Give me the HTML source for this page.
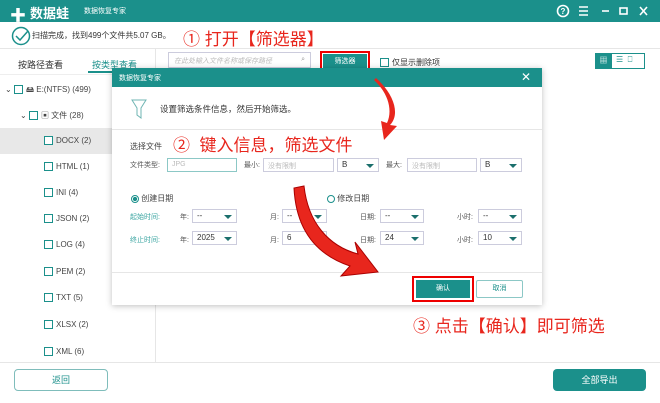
<!DOCTYPE html>
<html><head><meta charset="utf-8"><style>
*{margin:0;padding:0;box-sizing:border-box}
body{width:660px;height:403px;overflow:hidden;background:#fff;font-family:"Liberation Sans","Noto Sans CJK SC",sans-serif;position:relative;color:#333}
.a{position:absolute;white-space:nowrap}
.t{background:#1b908b}
.red{color:#e8261d;font-size:17px}
.cb{display:inline-block;width:9px;height:9px;border:1px solid #1b908b;vertical-align:middle;margin-right:3px;background:#fff}
.item{position:absolute;font-size:8px;color:#444}
.inp{position:absolute;height:14px;border:1px solid #ccd;background:#fff;font-size:7px;color:#bbb;padding:2px 4px}
.sel{position:absolute;height:14px;border:1px solid #ccd;background:#fff;font-size:8px;color:#333;padding:1px 4px}
.sel:after{content:"";position:absolute;right:4px;top:5px;border-left:4px solid transparent;border-right:4px solid transparent;border-top:4px solid #1b6f6c}
.lb{position:absolute;font-size:7px;color:#555}
</style></head><body>
<div class="a t" style="left:0;top:0;width:660px;height:22px"></div>
<div class="a" style="left:10px;top:2px;color:#fff;font-size:16px;font-weight:bold">✚</div>
<div class="a" style="left:30px;top:3px;color:#fff;font-size:13px;font-weight:bold">数据蛙</div>
<div class="a" style="left:84px;top:6px;color:#fff;font-size:7px">数据恢复专家</div>
<svg class="a" style="left:550px;top:0" width="110" height="22" fill="none" stroke="#fff" stroke-width="1.6">
<circle cx="13" cy="11" r="5.5"/><text x="10.5" y="14" fill="#fff" stroke="none" font-size="8" font-weight="bold" font-family="Liberation Sans">?</text>
<path d="M29 7h9M29 11h9M29 15h9"/>
<path d="M52 11h7"/>
<rect x="70" y="8" width="7" height="6"/>
<path d="M90 7l7 8M97 7l-7 8"/>
</svg>
<svg class="a" style="left:11px;top:26px" width="20" height="20"><circle cx="10" cy="10" r="8.5" fill="none" stroke="#1b908b" stroke-width="1.5"/><path d="M5 10l4 4 8-9" fill="none" stroke="#1b908b" stroke-width="1.5"/></svg>
<div class="a" style="left:32px;top:30px;font-size:8px;color:#333">扫描完成，找到499个文件共5.07 GB。</div>
<div class="a red" style="left:183px;top:25px">①&nbsp;打开【筛选器】</div>
<div class="a" style="left:0;top:48px;width:660px;height:1px;background:#e6e6e6"></div>
<div class="a" style="left:155px;top:48px;width:1px;height:314px;background:#e6e6e6"></div>
<div class="a" style="left:18px;top:58px;font-size:9px;color:#333">按路径查看</div>
<div class="a" style="left:92px;top:58px;font-size:9px;color:#1b908b">按类型查看</div>
<div class="a" style="left:88px;top:71px;width:52px;height:2px;background:#1b908b"></div>
<div class="a" style="left:0;top:74px;width:155px;height:1px;background:#eee"></div>
<div class="a" style="left:168px;top:52px;width:143px;height:16px;border:1px solid #ccd;font-size:7px;color:#bbb;padding:3px 5px;font-style:italic">在此处输入文件名称或保存路径 <span style="float:right;color:#999;font-style:normal">⌕</span></div>
<div class="a" style="left:320px;top:51px;width:50px;height:21px;border:2px solid #e00"></div>
<div class="a t" style="left:323px;top:54px;width:44px;height:15px;color:#fff;font-size:7px;text-align:center;line-height:15px">筛选器</div>
<div class="a" style="left:380px;top:57px;font-size:8px"><span class="cb"></span>仅显示删除项</div>
<div class="a" style="left:595px;top:53px;width:50px;height:16px;border:1px solid #1b908b"></div>
<div class="a t" style="left:595px;top:53px;width:17px;height:16px;color:#fff;font-size:8px;text-align:center;line-height:16px">▦</div>
<div class="a" style="left:616px;top:55px;font-size:8px;color:#1b908b">☰ &nbsp;⎕</div>
<div class="a" style="left:0;top:128px;width:155px;height:26px;background:#e8e8e8"></div>
<div class="item" style="left:5px;top:84px">⌄ <span class="cb"></span>🖴 E:(NTFS) (499)</div>
<div class="item" style="left:20px;top:110px">⌄ <span class="cb"></span>▣ 文件 (28)</div>
<div class="item" style="left:44px;top:136px"><span class="cb"></span>DOCX (2)</div>
<div class="item" style="left:44px;top:162px"><span class="cb"></span>HTML (1)</div>
<div class="item" style="left:44px;top:188px"><span class="cb"></span>INI (4)</div>
<div class="item" style="left:44px;top:214px"><span class="cb"></span>JSON (2)</div>
<div class="item" style="left:44px;top:240px"><span class="cb"></span>LOG (4)</div>
<div class="item" style="left:44px;top:267px"><span class="cb"></span>PEM (2)</div>
<div class="item" style="left:44px;top:293px"><span class="cb"></span>TXT (5)</div>
<div class="item" style="left:44px;top:320px"><span class="cb"></span>XLSX (2)</div>
<div class="item" style="left:44px;top:347px"><span class="cb"></span>XML (6)</div>
<div class="a" style="left:0;top:362px;width:660px;height:1px;background:#e6e6e6"></div>
<div class="a" style="left:14px;top:369px;width:94px;height:22px;border:1px solid #7fbdbb;border-radius:4px;color:#1b908b;font-size:9px;text-align:center;line-height:20px">返回</div>
<div class="a t" style="left:553px;top:369px;width:93px;height:22px;border-radius:4px;color:#fff;font-size:9px;text-align:center;line-height:22px">全部导出</div>
<div class="a red" style="left:413px;top:312px">③ 点击【确认】即可筛选</div>
<!-- dialog -->
<div class="a" style="left:112px;top:68px;width:430px;height:237px;background:#fff;box-shadow:0 1px 6px rgba(0,0,0,.25)"></div>
<div class="a t" style="left:112px;top:68px;width:430px;height:19px"></div>
<div class="a" style="left:119px;top:73px;color:#fff;font-size:7px">数据恢复专家</div>
<div class="a" style="left:521px;top:70px;color:#fff;font-size:12px">✕</div>
<svg class="a" style="left:131px;top:98px" width="16" height="22"><path d="M1 2h14l-5 8v10l-4-3v-7z" fill="none" stroke="#6fb5b3" stroke-width="1"/></svg>
<div class="a" style="left:160px;top:103px;font-size:8.5px;color:#333">设置筛选条件信息，然后开始筛选。</div>
<div class="a" style="left:112px;top:129px;width:430px;height:1px;background:#e6e6e6"></div>
<div class="a" style="left:130px;top:141px;font-size:8px;color:#444">选择文件</div>
<div class="a red" style="left:173px;top:131px">②&nbsp; 键入信息，筛选文件</div>
<div class="lb" style="left:130px;top:160px">文件类型:</div>
<div class="inp" style="left:167px;top:158px;width:70px;border-color:#8cc8c6">JPG</div>
<div class="lb" style="left:244px;top:160px">最小:</div>
<div class="inp" style="left:263px;top:158px;width:71px">没有限制</div>
<div class="sel" style="left:337px;top:158px;width:42px">B</div>
<div class="lb" style="left:386px;top:160px">最大:</div>
<div class="inp" style="left:407px;top:158px;width:70px">没有限制</div>
<div class="sel" style="left:480px;top:158px;width:42px">B</div>
<div class="a" style="left:131px;top:193px;font-size:8px;color:#444"><span style="display:inline-block;width:8px;height:8px;border-radius:50%;border:1px solid #1b908b;background:radial-gradient(#1b908b 45%,#fff 55%);vertical-align:middle"></span> 创建日期</div>
<div class="a" style="left:327px;top:193px;font-size:8px;color:#444"><span style="display:inline-block;width:8px;height:8px;border-radius:50%;border:1.5px solid #1b908b;vertical-align:middle"></span> 修改日期</div>
<div class="lb" style="left:130px;top:212px;color:#3aa5a1">起始时间:</div>
<div class="lb" style="left:130px;top:235px;color:#3aa5a1">终止时间:</div>
<div class="lb" style="left:180px;top:212px">年:</div><div class="sel" style="left:192px;top:209px;width:45px">--</div>
<div class="lb" style="left:270px;top:212px">月:</div><div class="sel" style="left:282px;top:209px;width:45px">--</div>
<div class="lb" style="left:360px;top:212px">日期:</div><div class="sel" style="left:380px;top:209px;width:44px">--</div>
<div class="lb" style="left:457px;top:212px">小时:</div><div class="sel" style="left:478px;top:209px;width:44px">--</div>
<div class="lb" style="left:180px;top:235px">年:</div><div class="sel" style="left:192px;top:231px;width:45px">2025</div>
<div class="lb" style="left:270px;top:235px">月:</div><div class="sel" style="left:282px;top:231px;width:45px">6</div>
<div class="lb" style="left:360px;top:235px">日期:</div><div class="sel" style="left:380px;top:231px;width:44px">24</div>
<div class="lb" style="left:457px;top:235px">小时:</div><div class="sel" style="left:478px;top:231px;width:44px">10</div>
<div class="a" style="left:112px;top:272px;width:430px;height:1px;background:#e6e6e6"></div>
<div class="a" style="left:412px;top:276px;width:62px;height:26px;border:2px solid #e00"></div>
<div class="a t" style="left:416px;top:280px;width:54px;height:18px;color:#fff;font-size:7px;text-align:center;line-height:18px">确认</div>
<div class="a" style="left:476px;top:280px;width:47px;height:18px;border:1px solid #8cc8c6;border-radius:2px;color:#1b908b;font-size:7px;text-align:center;line-height:16px">取消</div>
<svg class="a" style="left:0;top:0" width="660" height="403">
<path d="M376 78 C395 95 400 115 390 125 L397 126 L384 140 L381 121 L387 123 C393 110 388 93 374 80Z" fill="#e8261d"/>
<path d="M304 186 C308 222 328 246 358 254 L355 242 L378 272 L341 276 L350 266 C314 254 296 228 294 188Z" fill="#e8261d" stroke="#a00" stroke-width="1"/>
</svg>
</body></html>
